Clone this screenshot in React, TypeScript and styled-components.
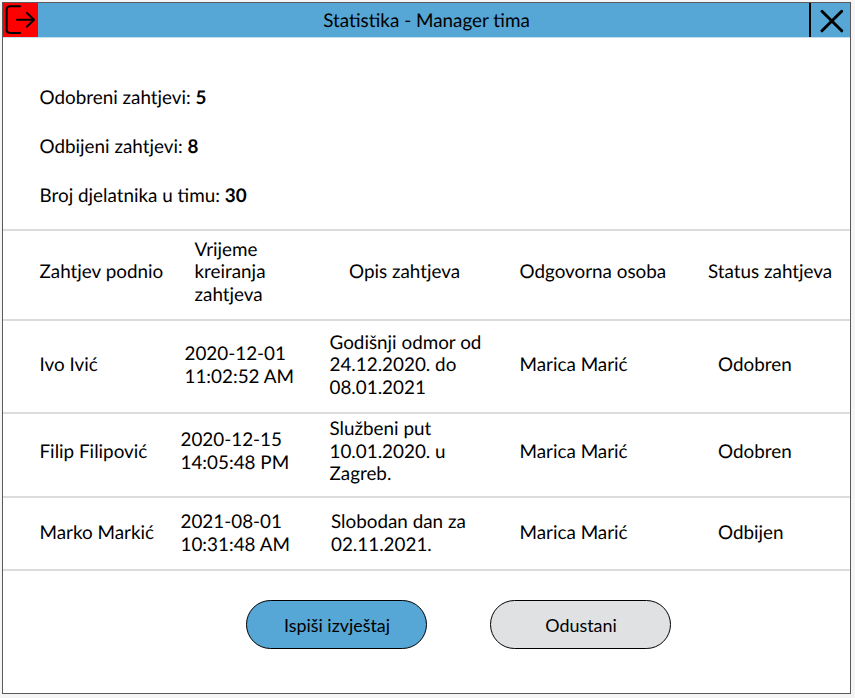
import React from "react";
import styled, { createGlobalStyle } from "styled-components";

const GlobalStyle = createGlobalStyle`
  * { box-sizing: border-box; }
  body {
    margin: 0;
    background: #f5f5f5;
    color: #000;
    font-family: Lato, Carlito, sans-serif;
    font-size: 18.85px;
    line-height: 22.4px;
    text-rendering: geometricPrecision;
  }
`;

const Window = styled.main`
  display: flex;
  flex-direction: column;
  width: 849px;
  height: 692px;
  margin: 2px 0 0 2px;
  border: 1px solid #5a5a5c;
  background: #fff;
`;

const TitleBar = styled.header`
  display: grid;
  grid-template-columns: 35px 1fr 41px;
  height: 35px;
  flex: none;
  background: #56a7d6;
  border-bottom: 1px solid #c3dff0;
`;

const IconButton = styled.button<{ $kind: "exit" | "close" }>`
  display: flex;
  height: 34px;
  padding: 0;
  border: 0;
  border-left: ${(p) => (p.$kind === "close" ? "2px solid #000" : "0")};
  background: ${(p) => (p.$kind === "exit" ? "#f00" : "transparent")};
`;

const Title = styled.h1`
  margin: 0;
  padding: 7px 0 0 6px;
  font-size: inherit;
  font-weight: 400;
  text-align: center;
`;

const Summary = styled.section`
  display: flex;
  flex-direction: column;
  gap: 26.6px;
  height: 191px;
  flex: none;
  padding: 49px 0 0 36.5px;
`;

const Metric = styled.p`
  margin: 0;
`;

const Row = styled.div<{ $height: number; $lift: number }>`
  display: grid;
  grid-template-columns: 141px 149px 190px 188.5px 1fr;
  align-items: center;
  flex: none;
  height: ${(p) => p.$height}px;
  padding: 0 0 ${(p) => p.$lift}px 36.5px;
  border-top: 2px solid #dcdcdc;
`;

const Cell = styled.div<{ $indent?: number }>`
  padding-left: ${(p) => p.$indent ?? 0}px;
  white-space: pre;
`;

const Actions = styled.footer`
  display: flex;
  gap: 63px;
  padding: 29px 0 0 243px;
  border-top: 2px solid #dcdcdc;
`;

const Button = styled.button<{ $primary?: boolean }>`
  width: 181px;
  height: 49px;
  padding: 2px 0 0 1px;
  border: 1.3px solid #000;
  border-radius: 25px;
  background: ${(p) => (p.$primary ? "#56a7d6" : "#e0e1e3")};
  color: #000;
  font: inherit;
  font-size: 17.9px;
`;

type Entry = { text: string; indent?: number };
const rows: { height: number; lift: number; cells: Entry[] }[] = [
  {
    height: 90,
    lift: 5,
    cells: [
      { text: "Zahtjev podnio" },
      { text: "Vrijeme\nkreiranja\nzahtjeva", indent: 14 },
      { text: "Opis zahtjeva", indent: 19.5 },
      { text: "Odgovorna osoba" },
      { text: "Status zahtjeva" },
    ],
  },
  {
    height: 93,
    lift: 2,
    cells: [
      { text: "Ivo Ivić" },
      { text: "2020-12-01\n11:02:52 AM", indent: 4 },
      { text: "Godišnji odmor od\n24.12.2020. do\n08.01.2021" },
      { text: "Marica Marić" },
      { text: "Odobren", indent: 10 },
    ],
  },
  {
    height: 84,
    lift: 6.6,
    cells: [
      { text: "Filip Filipović" },
      { text: "2020-12-15\n14:05:48 PM" },
      { text: "Službeni put\n10.01.2020. u\nZagreb." },
      { text: "Marica Marić" },
      { text: "Odobren", indent: 10 },
    ],
  },
  {
    height: 73,
    lift: 0,
    cells: [
      { text: "Marko Markić" },
      { text: "2021-08-01\n10:31:48 AM" },
      { text: "Slobodan dan za\n02.11.2021.", indent: 1.5 },
      { text: "Marica Marić" },
      { text: "Odbijen", indent: 10 },
    ],
  },
];

export default function App() {
  return (
    <>
      <GlobalStyle />
      <Window>
        <TitleBar>
          <IconButton $kind="exit" aria-label="Odjava">
            <svg width="35" height="34" viewBox="0 0 35 34" fill="none" stroke="#000" strokeWidth="2.1" strokeLinecap="round" strokeLinejoin="round">
              <path d="M17 3.3H7Q3.6 3.3 3.6 6.8V26.5Q3.6 30 7 30H17M14 16.7H31M24 10L31 16.7L24 23.6" />
            </svg>
          </IconButton>
          <Title>Statistika - Manager tima</Title>
          <IconButton $kind="close" aria-label="Zatvori">
            <svg width="39" height="34" viewBox="0 0 39 34" fill="none" stroke="#000" strokeWidth="3" strokeLinecap="round">
              <path d="M11 8.3L30.7 27.8M30.7 8.3L11 27.8" />
            </svg>
          </IconButton>
        </TitleBar>
        <Summary>
          <Metric>Odobreni zahtjevi: <b>5</b></Metric>
          <Metric>Odbijeni zahtjevi: <b>8</b></Metric>
          <Metric>Broj djelatnika u timu: <b>30</b></Metric>
        </Summary>
        {rows.map((row) => (
          <Row key={row.cells[0].text} $height={row.height} $lift={row.lift}>
            {row.cells.map((cell, i) => (
              <Cell key={i} $indent={cell.indent}>{cell.text}</Cell>
            ))}
          </Row>
        ))}
        <Actions>
          <Button $primary>Ispiši izvještaj</Button>
          <Button>Odustani</Button>
        </Actions>
      </Window>
    </>
  );
}
